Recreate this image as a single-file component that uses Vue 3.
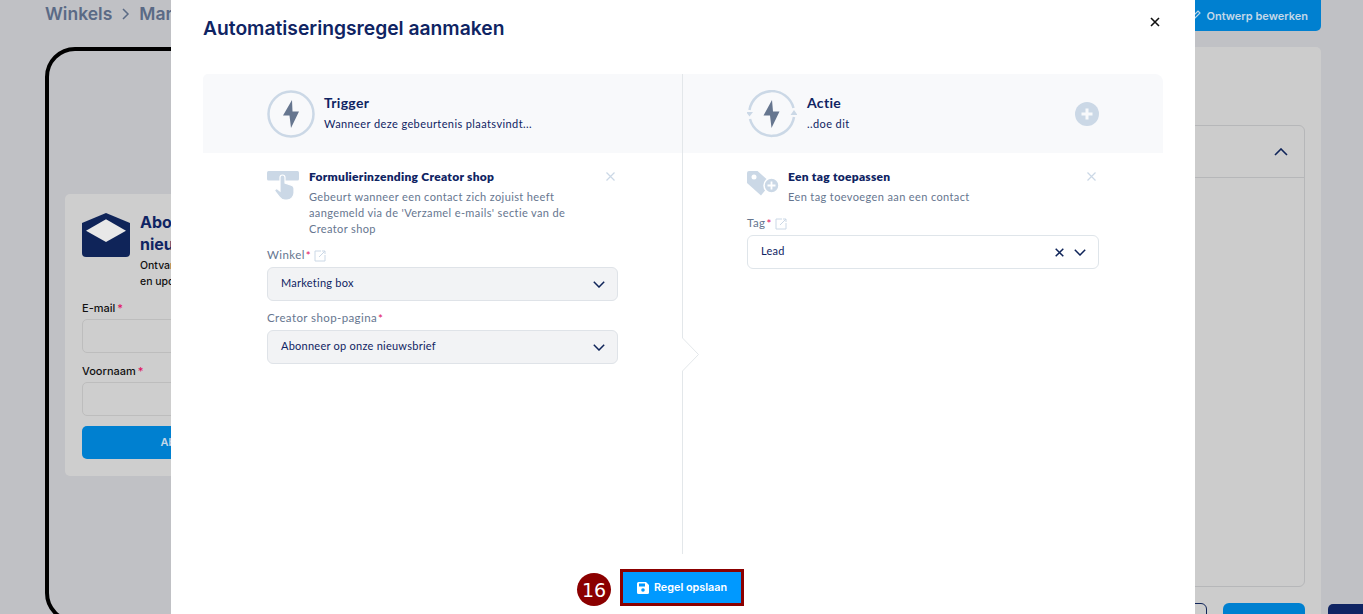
<script setup>
const selects = [
  { label: 'Winkel', link: true, value: 'Marketing box' },
  { label: 'Creator shop-pagina', link: false, value: 'Abonneer op onze nieuwsbrief' },
]
</script>

<template>
  <div class="screen">
    <div class="page">
      <header class="topbar">
        <div class="crumbs"><span>Winkels</span><svg class="crumb-arrow" width="10" height="12" viewBox="0 0 10 12"><path d="M2 1l5 5-5 5" fill="none" stroke="#5a6a85" stroke-width="1.5"/></svg><span class="crumb-current">Mar</span></div>
        <button class="edit-btn">
          <svg width="12" height="12" viewBox="0 0 12 12"><path d="M2 10l1-3 6-6 2 2-6 6z" fill="none" stroke="#c0d6e6" stroke-width="1.2"/></svg>
          Ontwerp bewerken
        </button>
      </header>
      <div class="work">
        <div class="phone">
          <div class="form-card">
            <div class="form-head">
              <svg class="envelope" width="48" height="44" viewBox="0 0 48 44">
                <path d="M24 0L48 10V40a4 4 0 0 1-4 4H4a4 4 0 0 1-4-4V10z" fill="#0f2459"/>
                <path d="M4 17.7L24 6.300L44 17.700L24 29z" fill="#e8e8e8"/>
              </svg>
              <div class="form-head-text">
                <div class="form-title">Abonneer op<br>nieuwsbrief</div>
                <div class="form-sub">Ontvang nieuws<br>en updates</div>
              </div>
            </div>
            <label class="f-label">E-mail<i>*</i></label>
            <div class="f-input"></div>
            <label class="f-label">Voornaam<i>*</i></label>
            <div class="f-input"></div>
            <div class="f-btn">Abonneren</div>
          </div>
        </div>
        <div class="side">
          <div class="accordion">
            <div class="acc-head">
              <svg width="14" height="8" viewBox="0 0 14 8"><path d="M1 7l6-6 6 6" fill="none" stroke="#0f2459" stroke-width="1.6"/></svg>
            </div>
          </div>
          <div class="side-actions">
            <div class="outline-btn"></div>
            <div class="solid-btn"></div>
          </div>
        </div>
        <div class="navy-tab"></div>
      </div>
    </div>

    <section class="modal">
      <div class="modal-head">
        <h1>Automatiseringsregel aanmaken</h1>
        <svg class="modal-close" width="10" height="10" viewBox="0 0 10 10"><path d="M1 1l8 8M9 1l-8 8" stroke="#111" stroke-width="1.6"/></svg>
      </div>

      <div class="builder">
        <div class="col col-left">
          <div class="col-head">
            <svg width="48" height="48" viewBox="0 0 48 48">
              <circle cx="24" cy="24" r="22.500" fill="none" stroke="#cbd8e6" stroke-width="2.500"/>
              <path d="M25 10L16 25.500H22.500L24 38L32 21.500H25.500z" fill="#66768f"/>
            </svg>
            <div class="head-text">
              <div class="head-title">Trigger</div>
              <div class="head-sub">Wanneer deze gebeurtenis plaatsvindt...</div>
            </div>
          </div>
          <div class="col-body">
            <div class="step">
              <svg class="step-icon" width="32" height="30" viewBox="0 0 32 30">
                <rect x="0" y="1" width="32" height="9.500" rx="1.500" fill="#cbd8e6"/>
                <path d="M13 7.500a2.500 2.500 0 0 1 5 0V13l7 2.500c1.500.6 2 1.600 2 3V23a7 7 0 0 1-7 7h-2c-2.500 0-4-1-5.500-3L8 21.500c-1-1.500 1-3.500 2.500-2.500l2.500 2z" fill="#cbd8e6" stroke="#fff" stroke-width="1.200"/>
              </svg>
              <div class="step-text">
                <div class="step-title">Formulierinzending Creator shop</div>
                <p class="step-desc">Gebeurt wanneer een contact zich zojuist heeft aangemeld via de 'Verzamel e-mails' sectie van de Creator shop</p>
              </div>
              <svg class="step-x" width="9" height="9" viewBox="0 0 9 9"><path d="M.5.5l8 8M8.500.5l-8 8" stroke="#cbd8e6" stroke-width="1.200"/></svg>
            </div>
            <div v-for="s in selects" :key="s.label" class="field">
              <div class="field-label">
                {{ s.label }}<i>*</i>
                <svg v-if="s.link" class="ext" width="12" height="12" viewBox="0 0 12 12"><path d="M7 1H1v10h10V5M5 7l6-6M8 1h3v3" fill="none" stroke="#cbd8e6" stroke-width="1"/></svg>
              </div>
              <div class="select select-grey">
                <span>{{ s.value }}</span>
                <svg class="chev" width="12" height="7" viewBox="0 0 12 7"><path d="M.8.800L6 6 11.200.8" fill="none" stroke="#0f2459" stroke-width="1.500"/></svg>
              </div>
            </div>
          </div>
        </div>

        <div class="col col-right">
          <div class="col-head">
            <svg width="50" height="48" viewBox="0 0 50 48">
              <path d="M2.500 20A22.500 22.500 0 0 1 46.500 18M47 27A22.500 22.500 0 0 1 3 29" fill="none" stroke="#cbd8e6" stroke-width="2.500"/>
              <path d="M-1 22h7l-3.500 4.500zM43.500 25h7L47 20z" fill="#cbd8e6"/>
              <path d="M25 10L16.500 25.500H23L24.500 38L32.500 21.500H26z" fill="#66768f"/>
            </svg>
            <div class="head-text head-text-r">
              <div class="head-title">Actie</div>
              <div class="head-sub">..doe dit</div>
            </div>
            <svg class="plus" width="24" height="24" viewBox="0 0 24 24">
              <circle cx="12" cy="12" r="12" fill="#cbd8e6"/>
              <path d="M12 6.500v11M6.500 12h11" stroke="#f8f9fb" stroke-width="3"/>
            </svg>
          </div>
          <div class="col-body">
            <div class="step step-r">
              <svg class="step-icon" width="32" height="28" viewBox="0 0 32 28">
                <path d="M2 1h8.500L24 13 14 25.500 0 13V3a2 2 0 0 1 2-2z" fill="#cbd8e6"/>
                <circle cx="7" cy="7" r="2.500" fill="#fff"/>
                <circle cx="24.500" cy="15.500" r="7.500" fill="#cbd8e6" stroke="#fff" stroke-width="1.500"/>
                <path d="M24.500 11.500v8M20.500 15.500h8" stroke="#fff" stroke-width="1.800"/>
              </svg>
              <div class="step-text">
                <div class="step-title">Een tag toepassen</div>
                <p class="step-desc">Een tag toevoegen aan een contact</p>
              </div>
              <svg class="step-x" width="9" height="9" viewBox="0 0 9 9"><path d="M.5.5l8 8M8.500.5l-8 8" stroke="#cbd8e6" stroke-width="1.200"/></svg>
            </div>
            <div class="field field-tag">
              <div class="field-label">
                Tag<i>*</i>
                <svg class="ext" width="12" height="12" viewBox="0 0 12 12"><path d="M7 1H1v10h10V5M5 7l6-6M8 1h3v3" fill="none" stroke="#cbd8e6" stroke-width="1"/></svg>
              </div>
              <div class="select select-white">
                <span>Lead</span>
                <svg class="tag-clear" width="9" height="9" viewBox="0 0 9 9"><path d="M.7.700l7.600 7.600M8.300.7L.7 8.300" stroke="#0f2459" stroke-width="1.500"/></svg>
                <svg class="chev" width="12" height="7" viewBox="0 0 12 7"><path d="M.8.800L6 6 11.200.8" fill="none" stroke="#0f2459" stroke-width="1.500"/></svg>
              </div>
            </div>
          </div>
        </div>

        <svg class="notch" width="18" height="34" viewBox="0 0 18 34">
          <path d="M0 0h1l15.500 16.500L1 33H0z" fill="#fff"/>
          <path d="M.5 0l16 16.500L.5 33" fill="none" stroke="#e3e7ea" stroke-width="1"/>
        </svg>
      </div>

      <footer class="modal-foot">
        <span class="badge">16</span>
        <div class="highlight">
          <button class="save">
            <svg width="12" height="12" viewBox="0 0 12 12"><path d="M1.500 0H9l3 3v7.500a1.500 1.500 0 0 1-1.500 1.500h-9A1.500 1.500 0 0 1 0 10.500v-9A1.500 1.500 0 0 1 1.500 0z" fill="#fff"/><rect x="2" y="1.500" width="6" height="3" fill="#09f"/><circle cx="6" cy="8" r="1.800" fill="#09f"/></svg>
            Regel opslaan
          </button>
        </div>
      </footer>
    </section>
  </div>
</template>

<style>
html, body { margin: 0; overflow: hidden; }
</style>

<style scoped>
.screen {
  position: relative;
  width: 1363px;
  height: 614px;
  overflow: hidden;
  background: #c0c1c5;
  font-family: Inter, "Liberation Sans", sans-serif;
}
.page { padding: 0 42px 0 45px; }
.topbar {
  height: 31px;
  display: flex;
  align-items: flex-start;
  justify-content: space-between;
}
.crumbs {
  display: flex;
  align-items: center;
  gap: 8px;
  height: 27px;
  font-size: 17.500px;
  font-weight: 600;
  color: #5a6a85;
}
.crumb-arrow { margin: 0 .5px; }
.crumb-current { white-space: nowrap; }
.edit-btn {
  height: 31px;
  padding: 0 13px;
  border: 0;
  border-radius: 0 0 5px 5px;
  background: #0080d0;
  color: #c4d8e8;
  font: 600 11px Inter, sans-serif;
  display: flex;
  align-items: center;
  gap: 5px;
}
.work {
  position: relative;
  margin-top: 16px;
  display: flex;
  gap: 15px;
  align-items: flex-start;
}
.phone {
  box-sizing: border-box;
  width: 290px;
  height: 576px;
  border: 4px solid #000;
  border-radius: 30px;
  padding: 16px;
  display: flex;
  align-items: center;
}
.form-card {
  flex: 1;
  height: 282px;
  box-sizing: border-box;
  background: #cecece;
  border-radius: 5px;
  padding: 19px 17px;
}
.form-head { display: flex; gap: 10px; }
.envelope { flex: none; }
.form-head-text { width: 110px; }
.form-title {
  margin-top: -2px;
  font-size: 16px;
  line-height: 22px;
  font-weight: 700;
  color: #0f2463;
}
.form-sub {
  margin-top: 3px;
  font-size: 10.500px;
  line-height: 16px;
  font-weight: 500;
  color: #111;
}
.f-label {
  display: block;
  margin-top: 9px;
  height: 17px;
  line-height: 19px;
  font-size: 11px;
  font-weight: 500;
  color: #111;
}
.f-label i { color: #e0105f; font-style: normal; margin-left: 2px; }
.form-head + .f-label { margin-top: 9px; }
.f-input {
  box-sizing: border-box;
  height: 34px;
  margin-top: 3px;
  border: 1px solid #bdbdbd;
  border-radius: 5px;
}
.f-btn {
  height: 33px;
  margin-top: 10px;
  background: #0080d0;
  border-radius: 5px;
  color: #c4d8e8;
  font-size: 11px;
  font-weight: 600;
  line-height: 33px;
  text-align: center;
}
.side {
  flex: 1;
  box-sizing: border-box;
  height: 600px;
  background: #cccccc;
  border-radius: 5px;
  padding: 78px 16px 0;
}
.accordion {
  box-sizing: border-box;
  height: 462px;
  border: 1px solid #b6b7b9;
  border-radius: 6px;
}
.acc-head {
  height: 51px;
  border-bottom: 1px solid #b6b7b9;
  display: flex;
  align-items: center;
  justify-content: flex-end;
  padding-right: 16px;
}
.side-actions {
  margin-top: 16px;
  display: flex;
  justify-content: flex-end;
  gap: 16px;
}
.outline-btn {
  width: 80px;
  height: 32px;
  box-sizing: border-box;
  border: 1px solid #0f2459;
  border-radius: 6px;
}
.solid-btn {
  width: 82px;
  height: 32px;
  background: #0080d0;
  border-radius: 6px;
}
.navy-tab {
  position: absolute;
  left: 1283px;
  top: 557px;
  width: 60px;
  height: 30px;
  background: #0f2463;
  border-radius: 5px;
}

.modal {
  position: absolute;
  left: 171px;
  top: 0;
  width: 1024px;
  height: 614px;
  box-sizing: border-box;
  padding: 0 32px;
  background: #fff;
  display: flex;
  flex-direction: column;
  color: #0f2463;
  font-family: Lato, "Open Sans", sans-serif;
}
.modal-head {
  height: 74px;
  display: flex;
  justify-content: space-between;
  align-items: flex-start;
  flex: none;
}
.modal-head h1 {
  margin: 16px 0 0;
  font: 600 19.250px/24px Inter, sans-serif;
  color: #0f2463;
}
.modal-close { margin: 17px 3px 0 0; }
.builder {
  position: relative;
  height: 480px;
  flex: none;
  display: flex;
}
.col { box-sizing: border-box; }
.col-left { width: 480px; border-right: 1px solid #e3e7ea; }
.col-right { flex: 1; }
.col-head {
  box-sizing: border-box;
  height: 79px;
  background: #f8f9fb;
  display: flex;
  align-items: center;
  padding-left: 64px;
  padding-top: 1px;
}
.col-left .col-head { border-radius: 5px 0 0 0; }
.col-right .col-head {
  border-radius: 0 8px 0 0;
  padding-left: 64px;
  padding-right: 64px;
}
.head-text { margin-left: 9px; flex: 1; }
.head-text-r { margin-left: 10px; }
.head-title {
  font-size: 14px;
  line-height: 18px;
  font-weight: 700;
  letter-spacing: .3px;
  margin-top: -3px;
}
.head-sub {
  margin-top: 4px;
  font-size: 11px;
  line-height: 16px;
  letter-spacing: .4px;
}
.plus { flex: none; }
.col-body { padding: 17px 64px 0; }
.step { display: flex; position: relative; min-height: 0; }
.step-icon { flex: none; margin-right: 10px; }
.step-r .step-icon { margin-right: 9px; }
.step-text { flex: 1; padding-right: 36px; }
.step-title {
  font-size: 12px;
  line-height: 14px;
  font-weight: 800;
  letter-spacing: .27px;
}
.step-desc {
  margin: 5px 0 0;
  font-size: 11px;
  line-height: 16px;
  letter-spacing: .38px;
  color: #66768f;
}
.step-x { position: absolute; right: 3px; top: 2px; }
.field { margin-top: 10px; }
.step + .field { margin-top: 9px; }
.field + .field { margin-top: 8px; }
.field-label {
  height: 18px;
  line-height: 18px;
  font-size: 11.500px;
  color: #66768f;
  letter-spacing: .4px;
  display: flex;
  align-items: center;
}
.field-label i {
  color: #e0105f;
  font-style: normal;
  margin-left: 1px;
  align-self: flex-start;
  margin-top: 1px;
}
.ext { margin: 1px 0 0 3px; }
.field-tag { margin-top: 9px; }
.select {
  box-sizing: border-box;
  height: 34px;
  margin-top: 3px;
  padding: 0 12px 0 13px;
  border-radius: 6px;
  display: flex;
  align-items: center;
  font-size: 11px;
  letter-spacing: .25px;
}
.select span { flex: 1; margin-top: -3px; }
.select-grey { background: #f2f3f5; border: 1px solid #dfe3e8; }
.select-white { background: #fff; border: 1px solid #dfe5ea; }
.tag-clear { margin-right: 10px; }
.chev { flex: none; }
.notch {
  position: absolute;
  left: 479px;
  top: 264px;
}
.modal-foot {
  flex: 1;
  display: flex;
  justify-content: center;
  align-items: flex-start;
  padding-top: 15px;
  padding-right: 2px;
  position: relative;
}
.highlight {
  box-sizing: border-box;
  width: 124px;
  height: 37px;
  border: 3px solid #8b0000;
  background: #fff;
}
.save {
  width: 100%;
  height: 100%;
  border: 0;
  padding: 0;
  background: #0099ff;
  color: #fff;
  font: 600 10.800px Inter, sans-serif;
  display: flex;
  align-items: center;
  justify-content: center;
  gap: 5px;
}
.badge {
  position: absolute;
  left: 374px;
  top: 19px;
  width: 34px;
  height: 33px;
  border-radius: 50%;
  background: #8b0000;
  color: #fff;
  font: 19px/34px "DejaVu Sans", sans-serif;
  text-align: center;
}
</style>
